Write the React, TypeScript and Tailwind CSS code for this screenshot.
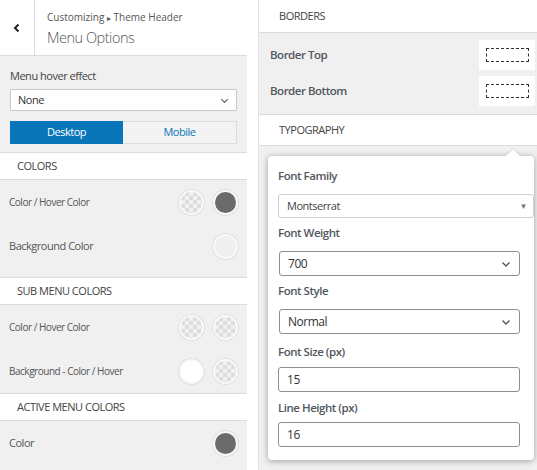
import React from "react";

const font = "font-['Segoe_UI','Open_Sans','Noto_Sans',sans-serif] tracking-[-0.03em]";

function Chevron({ className = "" }: { className?: string }) {
  return (
    <svg viewBox="0 0 12 12" className={className} fill="none" stroke="currentColor" strokeWidth={1.4}>
      <polyline points="2.5,4.5 6,8 9.5,4.5" />
    </svg>
  );
}

type Swatch = "checker" | "dark" | "light" | "white";

function Dot({ kind }: { kind: Swatch }) {
  const fill =
    kind === "checker"
      ? "bg-[image:repeating-conic-gradient(#dcdcdc_0%_25%,#f1f1f1_0%_50%)] bg-[length:8px_8px]"
      : kind === "dark"
      ? "bg-[#6b6b6b]"
      : kind === "white"
      ? "bg-white"
      : "bg-[#efefef]";
  return (
    <span
      className={`block h-[25px] w-[25px] rounded-full border-2 border-[#f8f8f8] shadow-[0_0_0_1px_#e0e0e0] ${fill}`}
    />
  );
}

function SectionBand({ title, className = "" }: { title: string; className?: string }) {
  return (
    <div
      className={`flex h-[28px] items-center border-y border-[#dcdcdc] bg-white pl-[17px] text-[11px] uppercase text-[#444] ${className}`}
    >
      {title}
    </div>
  );
}

function ColorRow({ label, dots, small }: { label: string; dots: Swatch[]; small?: boolean }) {
  return (
    <div className="flex h-[44px] items-center justify-between pl-[9px] pr-[9px]">
      <span className={`${small ? "text-[10px]" : "text-[11px]"} text-[#555]`}>{label}</span>
      <div className="flex gap-[9px]">
        {dots.map((d, i) => (
          <Dot key={i} kind={d} />
        ))}
      </div>
    </div>
  );
}

function LeftPanel() {
  return (
    <div className="flex h-full w-[247px] shrink-0 flex-col bg-[#f0f0f0]">
      <div className="flex h-[56px] border-b border-[#dcdcdc] bg-white">
        <div className="flex w-[35px] items-center justify-center border-r border-[#dcdcdc] text-[#222]">
          <svg viewBox="0 0 10 10" className="h-[10px] w-[10px]" fill="none" stroke="currentColor" strokeWidth={2}>
            <polyline points="6.5,1.5 3,5 6.5,8.5" />
          </svg>
        </div>
        <div className="flex flex-col pl-[12px] pt-[9px]">
          <span className="text-[10px] leading-[16px] tracking-normal text-[#555]">
            Customizing <span className="text-[8px]">▸</span> Theme Header
          </span>
          <span className="mt-[2px] text-[14.5px] font-light leading-[20px] text-[#555]">Menu Options</span>
        </div>
      </div>

      <div className="px-[10px] pt-[12px]">
        <div className="text-[11px] leading-[16px] text-[#444]">Menu hover effect</div>
        <div className="mt-[5px] flex h-[22px] items-center justify-between rounded-[2px] border border-[#c8c8c8] bg-white pl-[7px] pr-[6px] text-[11px] text-[#333]">
          <span>None</span>
          <Chevron className="h-[11px] w-[11px] text-[#666]" />
        </div>
        <div className="mt-[10px] flex h-[23px] text-[11px]">
          <div className="flex flex-1 items-center justify-center bg-[#0876b9] text-white">Desktop</div>
          <div className="flex flex-1 items-center justify-center border border-l-0 border-[#dcdcdc] bg-[#f3f3f3] text-[#0876b9]">
            Mobile
          </div>
        </div>
      </div>

      <SectionBand title="Colors" className="mt-[8px]" />
      <div className="pb-[9px]">
        <ColorRow label="Color / Hover Color" dots={["checker", "dark"]} small />
        <ColorRow label="Background Color" dots={["light"]} />
      </div>

      <SectionBand title="Sub Menu Colors" />
      <div>
        <ColorRow label="Color / Hover Color" dots={["checker", "checker"]} small />
        <ColorRow label="Background - Color / Hover" dots={["white", "checker"]} small />
      </div>

      <SectionBand title="Active Menu Colors" />
      <ColorRow label="Color" dots={["dark"]} />
    </div>
  );
}

function BorderRow({ label }: { label: string }) {
  return (
    <div className="flex h-[36px] items-center justify-between pl-[11px] pr-[8px]">
      <span className="text-[11.5px] font-semibold text-[#50575e]">{label}</span>
      <div className="flex h-[30px] w-[56px] items-center justify-center bg-white">
        <div className="h-[14px] w-[43px] border border-dashed border-[#333]" />
      </div>
    </div>
  );
}

function FieldLabel({ children, className = "" }: { children: React.ReactNode; className?: string }) {
  return <div className={`text-[11.5px] font-semibold leading-[16px] text-[#50575e] ${className}`}>{children}</div>;
}

function SelectBox({ value, className = "" }: { value: string; className?: string }) {
  return (
    <div
      className={`flex h-[25px] w-[241px] items-center justify-between rounded-[3px] border border-[#8f8f8f] bg-white pl-[8px] pr-[7px] text-[12px] text-[#333] ${className}`}
    >
      <span>{value}</span>
      <Chevron className="h-[12px] w-[12px] text-[#555]" />
    </div>
  );
}

function InputBox({ value, className = "" }: { value: string; className?: string }) {
  return (
    <div
      className={`flex h-[25px] w-[242px] items-center rounded-[3px] border border-[#8f8f8f] bg-white pl-[8px] text-[12px] text-[#333] ${className}`}
    >
      {value}
    </div>
  );
}

function RightPanel() {
  return (
    <div className="flex h-full flex-1 flex-col border-l border-[#e2e2e2] bg-[#f0f0f0]">
      <div className="flex h-[33px] items-center border-b border-[#dcdcdc] bg-white pl-[20px] text-[11px] uppercase text-[#444]">
        Borders
      </div>
      <div className="pt-[4px]">
        <BorderRow label="Border Top" />
        <BorderRow label="Border Bottom" />
      </div>
      <div className="mt-[5px] flex h-[32px] items-center border-y border-[#dcdcdc] bg-white pl-[20px] text-[11px] uppercase text-[#444]">
        Typography
      </div>

      <div className="relative mx-[9px] mt-[10px] rounded-[4px] bg-white pb-[13px] pl-[10px] pt-[12px] shadow-[0_1px_6px_rgba(0,0,0,0.35)]">
        <div className="absolute right-[16px] top-[-5px] h-[10px] w-[10px] rotate-45 bg-white shadow-[-1px_-1px_1px_rgba(0,0,0,0.08)]" />
        <FieldLabel>Font Family</FieldLabel>
        <div className="mt-[10px] flex h-[24px] w-[256px] items-center justify-between rounded-[3px] border border-[#cfcfcf] bg-white pl-[8px] pr-[6px] text-[11px] text-[#444]">
          <span>Montserrat</span>
          <span className="text-[8px] text-[#777]">▼</span>
        </div>
        <FieldLabel className="mt-[7px]">Font Weight</FieldLabel>
        <SelectBox value="700" className="ml-px mt-[10px]" />
        <FieldLabel className="mt-[7px]">Font Style</FieldLabel>
        <SelectBox value="Normal" className="ml-px mt-[10px]" />
        <FieldLabel className="mt-[10px]">Font Size (px)</FieldLabel>
        <InputBox value="15" className="mt-[7px]" />
        <FieldLabel className="mt-[8px]">Line Height (px)</FieldLabel>
        <InputBox value="16" className="mt-[6px]" />
      </div>
    </div>
  );
}

export default function App() {
  return (
    <div className={`flex h-[470px] w-[537px] overflow-hidden bg-white ${font}`}>
      <LeftPanel />
      <div className="w-[11px] shrink-0 bg-white" />
      <RightPanel />
    </div>
  );
}
